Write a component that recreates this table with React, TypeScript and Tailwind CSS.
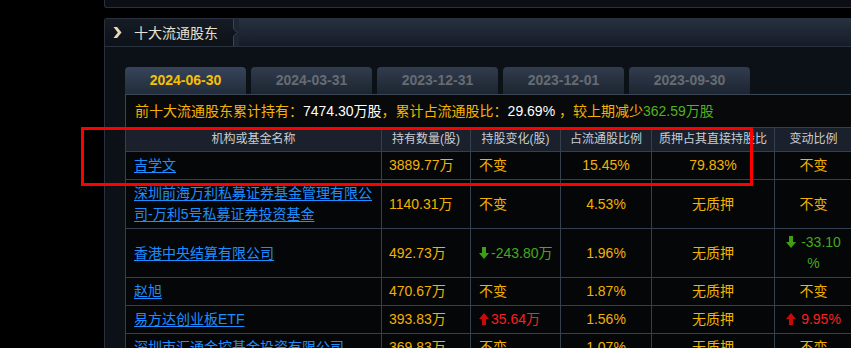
import React from "react";

const Down = ({ c }: { c: string }) => (
  <svg width="10" height="12" viewBox="0 0 10 12" className="inline-block align-[-1px]">
    <path d="M3 0h4v6h3L5 12 0 6h3z" fill={c} />
  </svg>
);
const Up = ({ c }: { c: string }) => (
  <svg width="10" height="12" viewBox="0 0 10 12" className="inline-block align-[-1px]">
    <path d="M5 0l5 6H7v6H3V6H0z" fill={c} />
  </svg>
);

const OR = "text-[#f2b200]";

type Row = {
  name: string;
  qty: string;
  chg: React.ReactNode;
  pct: string;
  pledge: string;
  var: React.ReactNode;
};

const rows: Row[] = [
  { name: "吉学文", qty: "3889.77万", chg: <span className={OR}>不变</span>, pct: "15.45%", pledge: "79.83%", var: <span className={OR}>不变</span> },
  {
    name: "深圳前海万利私募证券基金管理有限公司-万利5号私募证券投资基金",
    qty: "1140.31万",
    chg: <span className={OR}>不变</span>,
    pct: "4.53%",
    pledge: "无质押",
    var: <span className={OR}>不变</span>,
  },
  {
    name: "香港中央结算有限公司",
    qty: "492.73万",
    chg: (
      <span className="text-[#46a91c]">
        <Down c="#3f9f12" />
        <span className="ml-[2px]">-243.80万</span>
      </span>
    ),
    pct: "1.96%",
    pledge: "无质押",
    var: (
      <span className="text-[#46a91c]">
        <Down c="#3f9f12" />
        <span className="ml-[5px]">-33.10</span>
        <br />%
      </span>
    ),
  },
  { name: "赵旭", qty: "470.67万", chg: <span className={OR}>不变</span>, pct: "1.87%", pledge: "无质押", var: <span className={OR}>不变</span> },
  {
    name: "易方达创业板ETF",
    qty: "393.83万",
    chg: (
      <span className="text-[#ff1f1f]">
        <Up c="#c80a0a" />
        <span className="ml-[2px]">35.64万</span>
      </span>
    ),
    pct: "1.56%",
    pledge: "无质押",
    var: (
      <span className="text-[#ff1f1f]">
        <Up c="#c80a0a" />
        <span className="ml-[5px]">9.95%</span>
      </span>
    ),
  },
  { name: "深圳市汇通金控基金投资有限公司", qty: "369.83万", chg: <span className={OR}>不变</span>, pct: "1.07%", pledge: "无质押", var: <span className={OR}>不变</span> },
];

const tabs = ["2024-06-30", "2024-03-31", "2023-12-31", "2023-12-01", "2023-09-30"];

export default function App() {
  return (
    <div className="relative w-[851px] h-[348px] overflow-hidden bg-black font-['Liberation_Sans','Noto_Sans_CJK_SC',sans-serif]">
      <div className="pl-[104px]">
        <div className="h-[8px] w-[760px] border-l border-b border-[#28313d] rounded-bl-[3px] bg-[#0b0f15]" />
        <div className="mt-[10px] w-[760px] h-[400px] border-l border-t border-[#28313d] rounded-tl-[3px] bg-[#0c1017]">
          <div className="flex h-[28px] border-b border-[#28313d]">
            <div className="w-[128px] flex items-center bg-gradient-to-b from-[#161c25] to-[#0d1118]">
              <svg width="9" height="11" viewBox="0 0 9 11" className="ml-[8px]">
                <path d="M0.5 0h3.6L8.5 5.5 4.1 11H0.5L4.8 5.5z" fill="#e8d8ba" />
              </svg>
              <span className="ml-[12px] text-[14px] leading-[20px] text-[#e8e1d2]">十大流通股东</span>
            </div>
            <svg width="6" height="27" viewBox="0 0 6 27" className="block">
              <rect x="0" y="0" width="6" height="27" fill="#1d2632" />
              <path d="M0 0h1v10l4 3.5-4 3.5v10H0z" fill="#111620" />
              <path d="M0.5 0v10l4 3.5-4 3.5v10" stroke="#3a4554" strokeWidth="1" fill="none" />
            </svg>
            <div className="flex-1 bg-gradient-to-b from-[#263240] to-[#151c26]" />
          </div>
          <div className="pl-[20px] pt-[20px]">
            <div className="flex gap-[5px]">
              {tabs.map((t, i) => (
                <div
                  key={t}
                  className={
                    i === 0
                      ? "w-[121px] h-[27px] rounded-t-[4px] bg-gradient-to-b from-[#37445a] to-[#222c3a] flex items-center justify-center text-[14px] font-bold text-[#f7c000]"
                      : "w-[121px] h-[27px] rounded-t-[4px] bg-gradient-to-b from-[#313c4e] to-[#1d2531] flex items-center justify-center text-[14px] font-bold text-[#676b72]"
                  }
                >
                  {t}
                </div>
              ))}
            </div>
            <div className="bg-[#08090b]">
              <div className="h-[33px] border-l border-t border-[#3a4555] pl-[9px] pt-[6px] text-[14px] leading-[20px] text-[#f5b400] whitespace-nowrap">
                前十大流通股东累计持有：<span className="text-white">7474.30万股</span>，累计占流通股比：
                <span className="text-white">29.69%</span> ，较上期减少<span className="text-[#4fb31c]">362.59万股</span>
              </div>
              <table className="table-fixed border-collapse w-[727px] text-[14px]">
                <colgroup>
                  <col className="w-[256px]" />
                  <col className="w-[89px]" />
                  <col className="w-[90px]" />
                  <col className="w-[91px]" />
                  <col className="w-[123px]" />
                  <col className="w-[78px]" />
                </colgroup>
                <thead>
                  <tr className="bg-[#1a212c]">
                    {["机构或基金名称", "持有数量(股)", "持股变化(股)", "占流通股比例", "质押占其直接持股比", "变动比例"].map((h) => (
                      <th
                        key={h}
                        className="border border-[#363f4c] py-[3px] text-[12px] leading-[17px] font-normal text-[#c9cdd3] text-center whitespace-nowrap overflow-hidden"
                      >
                        {h}
                      </th>
                    ))}
                  </tr>
                </thead>
                <tbody>
                  {rows.map((r) => (
                    <tr key={r.name} className="bg-[#050607]">
                      <td className="border border-[#363f4c] pl-[8px] pr-[4px] py-[3px] leading-[21px] align-middle">
                        <span className="text-[#1c8eff] underline underline-offset-[2px]">{r.name}</span>
                      </td>
                      <td className={`border border-[#363f4c] pl-[7px] py-[3px] leading-[21px] align-middle ${OR}`}>{r.qty}</td>
                      <td className="border border-[#363f4c] pl-[8px] py-[3px] leading-[21px] align-middle whitespace-nowrap">{r.chg}</td>
                      <td className={`border border-[#363f4c] py-[3px] leading-[21px] text-center align-middle ${OR}`}>{r.pct}</td>
                      <td className={`border border-[#363f4c] py-[3px] leading-[21px] text-center align-middle ${OR}`}>{r.pledge}</td>
                      <td className="border border-[#363f4c] px-[6px] py-[3px] leading-[21px] text-center align-middle">{r.var}</td>
                    </tr>
                  ))}
                </tbody>
              </table>
            </div>
          </div>
        </div>
      </div>
      <div className="absolute left-[81px] top-[127px] w-[672px] h-[59px] border-[3px] border-[#ff0000] pointer-events-none" />
    </div>
  );
}
